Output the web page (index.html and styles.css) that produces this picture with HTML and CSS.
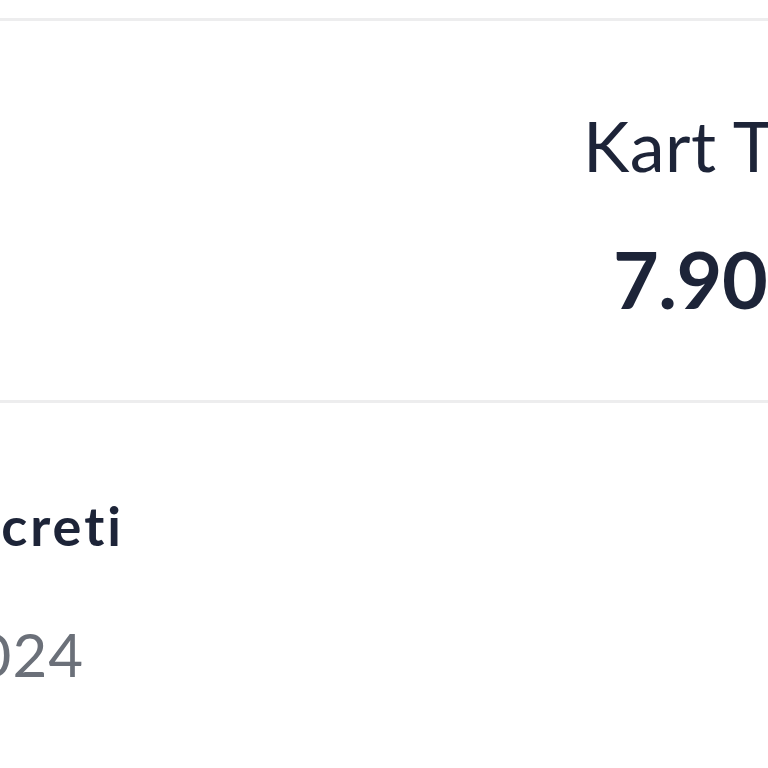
FILE: index.html
```html
<!DOCTYPE html>
<html lang="tr">
<head>
<meta charset="utf-8">
<title>Ödeme Detayı</title>
<link rel="stylesheet" href="styles.css">
</head>
<body>
<div class="page">
  <div class="rule rule-top"></div>
  <section class="summary">
    <div class="summary-col">
      <div class="label">Kart Tutarı</div>
      <div class="amount">7.900,00 ₺</div>
    </div>
  </section>
  <div class="rule"></div>
  <section class="detail">
    <div class="detail-line title-line"><span class="title">Hizmet Ücreti</span></div>
    <div class="detail-line date-line"><span class="date">12.03.2024</span></div>
  </section>
</div>
</body>
</html>
```
FILE: styles.css
```css
html, body {
  margin: 0;
  padding: 0;
  background: #ffffff;
  overflow: hidden;
}
.page {
  width: 768px;
  height: 768px;
  overflow: hidden;
  display: flex;
  flex-direction: column;
  font-family: "Lato", "Noto Sans", sans-serif;
  color: #1d2438;
}
.rule {
  height: 3px;
  background: #ededee;
  flex: none;
}
.rule-top {
  margin-top: 18px;
}
.summary {
  display: flex;
  padding: 89px 0 82px 583px;
}
.summary-col {
  display: flex;
  flex-direction: column;
  gap: 59px;
  white-space: nowrap;
}
.label {
  font-size: 70px;
  line-height: 1;
  font-weight: 400;
  letter-spacing: 0.5px;
}
.amount {
  font-size: 79px;
  line-height: 1;
  font-weight: 700;
  letter-spacing: -0.5px;
  margin-left: 30px;
}
.detail {
  display: flex;
  flex-direction: column;
  gap: 71px;
  padding-top: 96px;
}
.detail-line {
  display: flex;
  justify-content: flex-end;
  white-space: nowrap;
}
.title-line {
  width: 124px;
}
.date-line {
  width: 84px;
}
.title {
  font-size: 54px;
  line-height: 1;
  font-weight: 700;
  letter-spacing: 3px;
}
.date {
  font-size: 60px;
  line-height: 1;
  font-weight: 400;
  color: #6b7079;
  letter-spacing: 1px;
}
```
